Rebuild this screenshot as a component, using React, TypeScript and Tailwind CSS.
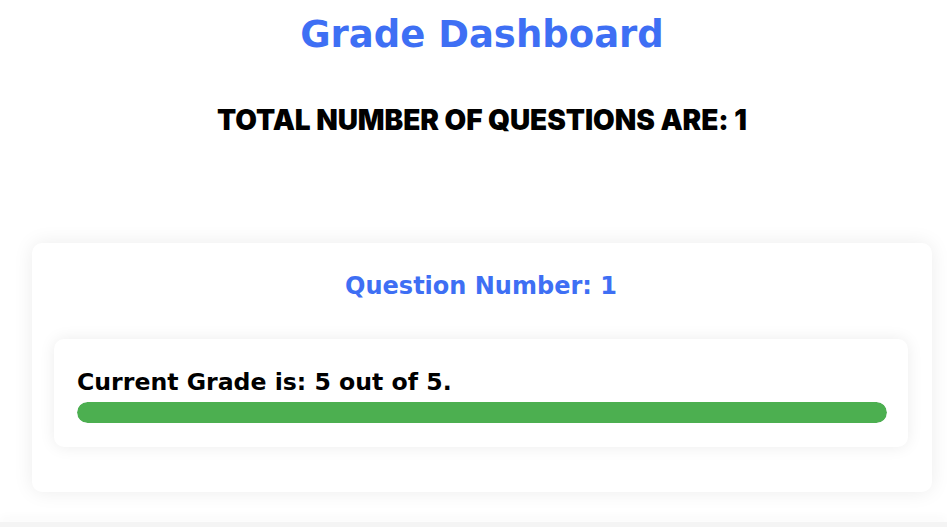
import React from "react";

export default function App() {
  return (
    <div className="h-[527px] w-full bg-white overflow-hidden flex flex-col">
      <div className="w-[964px] flex-1 flex flex-col font-['DejaVu_Sans',sans-serif]">
        <h1 className="text-center text-[37px] leading-[48px] font-bold text-[#3e6ff4] mt-[11px]">
          Grade Dashboard
        </h1>
        <h2 className="text-center text-[28px] leading-[32px] font-black text-black mt-[45px] font-['Inter',sans-serif] tracking-[-0.05px]">
          TOTAL NUMBER OF QUESTIONS ARE: 1
        </h2>
        <div className="ml-[32px] w-[900px] mt-[107px] bg-white rounded-[10px] shadow-[0_0_20px_rgba(0,0,0,0.08)] pl-[22px] pr-[24px] pt-[28px] pb-[45px]">
          <h3 className="text-center text-[24px] leading-[30px] font-bold text-[#3e6ff4]">
            Question Number: 1
          </h3>
          <div className="mt-[38px] bg-white rounded-[10px] shadow-[0_0_16px_rgba(0,0,0,0.08)] pl-[23px] pr-[21px] pt-[28px] pb-[24px]">
            <p className="text-[23.6px] leading-[30px] font-bold text-black">Current Grade is: 5 out of 5.</p>
            <div className="mt-[5px] h-[21px] w-full rounded-full bg-[#e5e7eb] overflow-hidden">
              <div className="h-full rounded-full bg-[#4caf50]" style={{ width: "100%" }} />
            </div>
          </div>
        </div>
        <div className="flex-1" />
      </div>
      <div className="h-[5px] bg-[#f4f4f4] shadow-[0_-4px_10px_rgba(0,0,0,0.04)]" />
    </div>
  );
}
